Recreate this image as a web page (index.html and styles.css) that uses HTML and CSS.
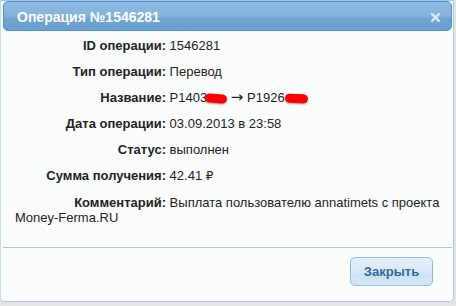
FILE: index.html
```
<!DOCTYPE html>
<html>
<head>
<meta charset="utf-8">
<link rel="stylesheet" href="styles.css">
</head>
<body>
<div class="dialog">
  <div class="titlebar">
    <span class="title">Операция №1546281</span>
    <svg class="close" width="9" height="9" viewBox="0 0 9 9"><path d="M1.2 1.2 L7.8 7.8 M7.8 1.2 L1.2 7.8" stroke="#dbe9f5" stroke-width="2.4" stroke-linecap="square"/></svg>
  </div>
  <div class="content">
    <div class="row"><span class="label">ID операции:</span> 1546281</div>
    <div class="row"><span class="label">Тип операции:</span> Перевод</div>
    <div class="row"><span class="label">Название:</span> P1403<span class="blot b1"></span> <span class="arrow">→</span> P1926<span class="blot b2"></span></div>
    <div class="row"><span class="label">Дата операции:</span> 03.09.2013 в 23:58</div>
    <div class="row"><span class="label">Статус:</span> выполнен</div>
    <div class="row"><span class="label">Сумма получения:</span> 42.41 <span class="rub">₽</span></div>
    <div class="row"><span class="label">Комментарий:</span> Выплата пользователю annatimets с проекта Money-Ferma.RU</div>
  </div>
  <div class="buttonpane">
    <button class="btn">Закрыть</button>
  </div>
</div>
</body>
</html>
```
FILE: styles.css
```
html, body {
  margin: 0;
  padding: 0;
}
body {
  width: 456px;
  height: 306px;
  background: #e4e4e4;
  font-family: "Liberation Sans", Arial, sans-serif;
  overflow: hidden;
}
.dialog {
  box-sizing: border-box;
  width: 454px;
  height: 302px;
  background: #fbfdfd;
  border: 1px solid #a6c9e2;
  border-left-color: #c8dcec;
  border-radius: 0 0 5px 5px;
  padding: 0 1px 0 1px;
  display: flex;
  flex-direction: column;
}
.titlebar {
  box-sizing: border-box;
  height: 30px;
  margin: 0 0 0 1px;
  border: 1px solid #4f8fcc;
  border-radius: 5px;
  background: linear-gradient(to bottom, #90bde2 0%, #83b3dc 50%, #6fa4d2 60%, #6aa0d0 100%);
  display: flex;
  align-items: center;
  justify-content: space-between;
  padding: 0 11px 0 13px;
}
.title {
  color: #ffffff;
  font-weight: bold;
  font-size: 14px;
  padding-top: 1px;
}
.close {
  display: block;
  margin-top: 2px;
}
.content {
  flex: 1;
  padding: 7px 10px 0 13px;
  font-size: 13px;
  line-height: 15px;
  color: #222222;
}
.row {
  margin-bottom: 11px;
}
.label {
  display: inline-block;
  width: 151px;
  text-align: right;
  font-weight: bold;
  color: #222222;
}
.arrow {
  font-family: "DejaVu Sans", sans-serif;
  font-size: 15px;
  line-height: 1;
}
.blot {
  display: inline-block;
  height: 9px;
  background: #ff0000;
  border-radius: 5px;
  vertical-align: -1px;
  box-shadow: 0 1px 2px rgba(0,0,0,0.4);
}
.b1 { width: 22px; margin-left: -2px; transform: rotate(4deg); }
.b2 { width: 23px; margin-left: 0; transform: rotate(3deg); }
.rub {
  font-family: "DejaVu Sans", sans-serif;
  font-size: 12px;
}
.buttonpane {
  border-top: 1px solid #a9c6df;
  height: 54px;
  margin: 0 0 0 1px;
  display: flex;
  justify-content: flex-end;
  align-items: flex-start;
  padding: 9px 19px 0 0;
  box-sizing: border-box;
}
.btn {
  width: 83px;
  height: 29px;
  border: 1px solid #8ebde5;
  border-radius: 5px;
  background: linear-gradient(to bottom, #e3eff9 0%, #dae9f7 50%, #cde2f4 60%, #d3e6f6 100%);
  color: #2e6a9e;
  font-family: "Liberation Sans", Arial, sans-serif;
  font-weight: bold;
  font-size: 13px;
  padding: 0;
}
```
